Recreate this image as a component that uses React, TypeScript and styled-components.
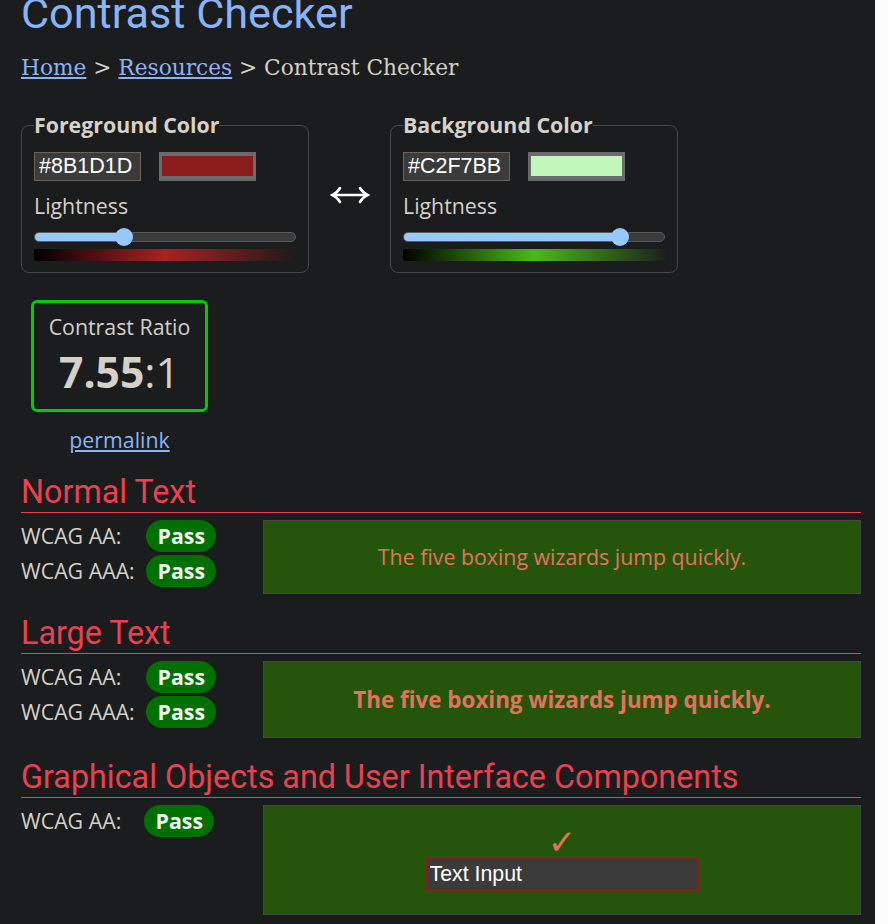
import React from "react";
import styled, { createGlobalStyle } from "styled-components";

const Global = createGlobalStyle`
  html, body { margin: 0; padding: 0; background: #fcfcfc; }
  body { font-family: "Open Sans", sans-serif; font-size: 21.33px; }
  * { box-sizing: border-box; }
`;

const Page = styled.main`
  width: 875px;
  min-height: 924px;
  background: #1b1c1e;
  padding: 0 14px 0 21px;
  overflow: hidden;
  color: #d4d0ca;
  line-height: 1.5;
`;

const Title = styled.h1`
  margin: -12px 0 0;
  font-family: Roboto, sans-serif;
  font-weight: 400;
  font-size: 43.2px;
  line-height: 51px;
  color: #8ab4f8;
`;

const Crumbs = styled.nav`
  margin-top: 13px;
  font-family: "DejaVu Serif", serif;
  font-size: 21.7px;
  line-height: 32px;
  color: #d4d0c6;
`;

const Link = styled.a`
  color: #8ab4f8;
  text-decoration: underline;
`;

const PickerRow = styled.div`
  margin-top: 26px;
  display: flex;
  align-items: center;
`;

const Fieldset = styled.fieldset`
  margin: 0;
  width: 288px;
  border: 1px solid #47484a;
  border-radius: 8px;
  padding: 12px 12px 11px;
  min-width: 0;
`;

const Legend = styled.legend`
  padding: 0;
  font-weight: 700;
  font-size: 21.33px;
  line-height: 30px;
  color: #d6d1c9;
`;

const HexRow = styled.div`
  display: flex;
  gap: 18px;
  height: 29px;
`;

const HexInput = styled.input`
  width: 107px;
  height: 29px;
  margin: 0;
  padding: 0 4px;
  border: 1px solid #6e6254;
  background: #3b3b3b;
  color: #ffffff;
  font-family: "Liberation Sans", Arial, sans-serif;
  font-size: 21.5px;
  outline: none;
`;

const Swatch = styled.div`
  width: 97px;
  height: 29px;
  padding: 4px 3px 5px;
  background: #6b6b6b;
`;

const SwatchFill = styled.div<{ $color: string }>`
  width: 100%;
  height: 100%;
  background: ${(p) => p.$color};
`;

const FieldLabel = styled.div`
  margin-top: 9px;
  line-height: 32px;
  color: #d4d0ca;
`;

const Slider = styled.div`
  position: relative;
  margin-top: 6px;
  height: 18px;
  display: flex;
  align-items: center;
`;

const Track = styled.div`
  width: 100%;
  height: 10px;
  border-radius: 5px;
  background: #3b3b3b;
  border: 1px solid #5a5a5a;
  overflow: hidden;
`;

const TrackFill = styled.div`
  height: 100%;
  background: #99c8ff;
`;

const Thumb = styled.div`
  position: absolute;
  top: 0;
  width: 18px;
  height: 18px;
  margin-left: -9px;
  border-radius: 50%;
  background: #99c8ff;
`;

const Gradient = styled.div<{ $mid: string; $end: string }>`
  margin-top: 3px;
  height: 12px;
  border-radius: 2px;
  background: linear-gradient(to right, #000000, ${(p) => p.$mid} 50%, ${(p) => p.$end});
`;

const Swap = styled.div`
  width: 81px;
  display: flex;
  justify-content: center;
  align-items: center;
  color: #ffffff;
  padding-top: 7px;
`;

const RatioBox = styled.div`
  margin: 27px 0 0 10px;
  width: 177px;
  border: 3px solid #00cc00;
  border-radius: 6px;
  padding: 9px 0 7px;
  text-align: center;
`;

const RatioLabel = styled.div`
  line-height: 30px;
  color: #d4d0ca;
`;

const RatioValue = styled.div`
  font-size: 42.67px;
  line-height: 60px;
  color: #d4d0ca;
`;

const Strong = styled.b`
  font-weight: 700;
`;

const Permalink = styled.div`
  margin: 13px 0 0 10px;
  width: 177px;
  text-align: center;
  line-height: 30px;
`;

const Sections = styled.div`
  margin-top: 18px;
  display: flex;
  flex-direction: column;
  gap: 20px;
`;

const Heading = styled.h2`
  margin: 0;
  padding: 1px 0 1px;
  border-bottom: 1px solid #e9414f;
  font-family: Roboto, sans-serif;
  font-weight: 400;
  font-size: 32.3px;
  line-height: 37px;
  color: #e9414f;
`;

const Body = styled.div`
  margin-top: 7px;
  display: grid;
  grid-template-columns: 242px 1fr;
  align-items: start;
`;

const Results = styled.div`
  display: flex;
  flex-direction: column;
  gap: 3px;
`;

const Result = styled.div`
  display: flex;
  align-items: center;
  height: 32px;
`;

const Level = styled.span<{ $w: number }>`
  width: ${(p) => p.$w}px;
  color: #d4d0ca;
`;

const Badge = styled.span`
  display: inline-flex;
  align-items: center;
  height: 32px;
  padding: 0 11.5px;
  border-radius: 16px;
  background: #007000;
  color: #f2f2f2;
  font-weight: 700;
`;

const Sample = styled.div<{ $large?: boolean }>`
  border: 1px solid #474747;
  background: #24550a;
  padding: 20px 10px;
  text-align: center;
  color: #e5715e;
  font-size: ${(p) => (p.$large ? "22.4px" : "21.33px")};
  font-weight: ${(p) => (p.$large ? 700 : 400)};
  line-height: ${(p) => (p.$large ? "35px" : "32px")};
`;

const UISample = styled.div`
  border: 1px solid #474747;
  background: #24550a;
  padding: 21px 0 23px;
  display: flex;
  flex-direction: column;
  align-items: center;
`;

const Check = styled.div`
  font-family: "DejaVu Sans", sans-serif;
  font-size: 34px;
  line-height: 30px;
  color: #e5715e;
`;

const TextInput = styled.input`
  width: 275px;
  height: 34px;
  margin: 0;
  padding: 0 3px;
  border: 2px solid #8b1d1d;
  background: #3b3b3b;
  color: #ffffff;
  font-family: "Liberation Sans", Arial, sans-serif;
  font-size: 21.33px;
  outline: none;
`;

type Picker = { title: string; hex: string; pos: number; mid: string; end: string };

const ColorPicker = ({ title, hex, pos, mid, end }: Picker) => (
  <Fieldset>
    <Legend>{title}</Legend>
    <HexRow>
      <HexInput defaultValue={hex} />
      <Swatch>
        <SwatchFill $color={hex} />
      </Swatch>
    </HexRow>
    <FieldLabel>Lightness</FieldLabel>
    <Slider>
      <Track>
        <TrackFill style={{ width: `${pos}%` }} />
      </Track>
      <Thumb style={{ left: `${pos}%` }} />
    </Slider>
    <Gradient $mid={mid} $end={end} />
  </Fieldset>
);

const Section = ({
  title,
  levels,
  w,
  children,
}: {
  title: string;
  levels: string[];
  w: number;
  children: React.ReactNode;
}) => (
  <section>
    <Heading>{title}</Heading>
    <Body>
      <Results>
        {levels.map((l) => (
          <Result key={l}>
            <Level $w={w}>{l}</Level>
            <Badge>Pass</Badge>
          </Result>
        ))}
      </Results>
      {children}
    </Body>
  </section>
);

export default function App() {
  return (
    <>
      <Global />
      <Page>
        <Title>Contrast Checker</Title>
        <Crumbs>
          <Link href="#">Home</Link> &gt; <Link href="#">Resources</Link> &gt; Contrast Checker
        </Crumbs>
        <PickerRow>
          <ColorPicker title="Foreground Color" hex="#8B1D1D" pos={34.4} mid="#a82222" end="#1e1a1a" />
          <Swap>
            <svg width="40" height="20" viewBox="0 0 40 20" fill="none" stroke="#ffffff" strokeWidth="2.6" strokeLinecap="round">
              <path d="M3 10 H37" />
              <path d="M10 3 Q7 8 2.5 10 Q7 12 10 17" />
              <path d="M30 3 Q33 8 37.5 10 Q33 12 30 17" />
            </svg>
          </Swap>
          <ColorPicker title="Background Color" hex="#C2F7BB" pos={82.8} mid="#4cb81c" end="#1c211b" />
        </PickerRow>
        <RatioBox>
          <RatioLabel>Contrast Ratio</RatioLabel>
          <RatioValue>
            <Strong>7.55</Strong>:1
          </RatioValue>
        </RatioBox>
        <Permalink>
          <Link href="#">permalink</Link>
        </Permalink>
        <Sections>
          <Section title="Normal Text" levels={["WCAG AA:", "WCAG AAA:"]} w={125}>
            <Sample>The five boxing wizards jump quickly.</Sample>
          </Section>
          <Section title="Large Text" levels={["WCAG AA:", "WCAG AAA:"]} w={125}>
            <Sample $large>The five boxing wizards jump quickly.</Sample>
          </Section>
          <Section title="Graphical Objects and User Interface Components" levels={["WCAG AA:"]} w={123}>
            <UISample>
              <Check>✓</Check>
              <TextInput defaultValue="Text Input" />
            </UISample>
          </Section>
        </Sections>
      </Page>
    </>
  );
}
